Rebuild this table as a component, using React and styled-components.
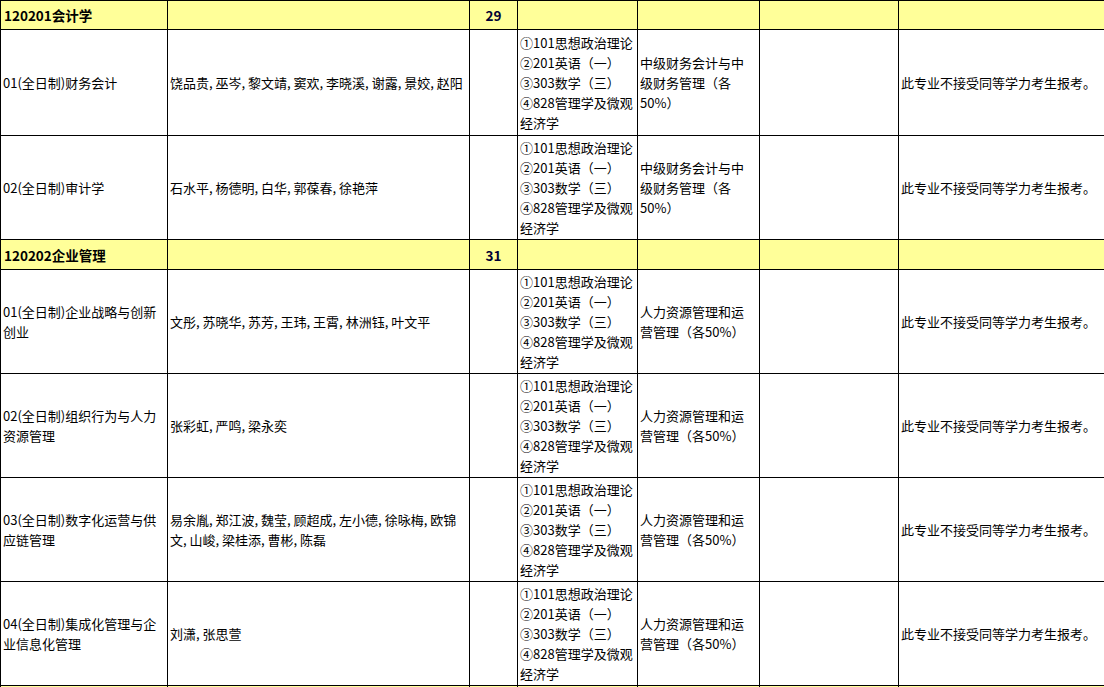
import React from "react";
import styled, { createGlobalStyle } from "styled-components";

const GlobalStyle = createGlobalStyle`
  html, body {
    margin: 0;
    padding: 0;
    background: #ffffff;
    overflow: hidden;
  }
  body {
    font-family: "Noto Sans CJK SC", "Noto Sans", sans-serif;
    font-size: 13px;
    color: #000;
  }
`;

const COLS = [167, 302, 48, 120, 122, 139, 320];

const Sheet = styled.table`
  border-collapse: collapse;
  table-layout: fixed;
  width: ${COLS.reduce((a, b) => a + b, 0)}px;
`;

const Row = styled.tr`
  height: ${props => props.h}px;
  background: ${props => (props.group ? "#ffff99" : "#ffffff")};
`;

const Cell = styled.td`
  border: 1px solid #000;
  padding: 0 ${props => props.pr || 2}px 0 ${props => props.pl || 2}px;
  vertical-align: middle;
  line-height: 20px;
  font-size: ${props => (props.bold ? 13.5 : 13)}px;
  overflow: hidden;
  text-align: ${props => (props.center ? "center" : "left")};
  font-weight: ${props => (props.bold ? 700 : 400)};
  color: ${props => props.tint || "#000"};
`;

const CourseLine = styled.div`
  line-height: 20px;
`;

const COURSES = [
  "①101思想政治理论",
  "②201英语（一）",
  "③303数学（三）",
  "④828管理学及微观经济学",
];

const NOTE = "此专业不接受同等学力考生报考。";

const groups = [
  {
    code: "120201会计学",
    count: "29",
    h: 29,
    rows: [
      {
        name: "01(全日制)财务会计",
        tutors: "饶品贵, 巫岑, 黎文靖, 窦欢, 李晓溪, 谢露, 景姣, 赵阳",
        retest: "中级财务会计与中级财务管理（各50%）",
        h: 106,
      },
      {
        name: "02(全日制)审计学",
        tutors: "石水平, 杨德明, 白华, 郭葆春, 徐艳萍",
        retest: "中级财务会计与中级财务管理（各50%）",
        h: 104,
      },
    ],
  },
  {
    code: "120202企业管理",
    count: "31",
    h: 30,
    rows: [
      {
        name: "01(全日制)企业战略与创新创业",
        tutors: "文彤, 苏晓华, 苏芳, 王玮, 王霄, 林洲钰, 叶文平",
        retest: "人力资源管理和运营管理（各50%）",
        h: 104,
      },
      {
        name: "02(全日制)组织行为与人力资源管理",
        tutors: "张彩虹, 严鸣, 梁永奕",
        retest: "人力资源管理和运营管理（各50%）",
        h: 104,
      },
      {
        name: "03(全日制)数字化运营与供应链管理",
        tutors: "易余胤, 郑江波, 魏莹, 顾超成, 左小德, 徐咏梅, 欧锦文, 山峻, 梁桂添, 曹彬, 陈磊",
        retest: "人力资源管理和运营管理（各50%）",
        h: 104,
      },
      {
        name: "04(全日制)集成化管理与企业信息化管理",
        tutors: "刘潇, 张思萱",
        retest: "人力资源管理和运营管理（各50%）",
        h: 104,
      },
    ],
  },
];

const GroupRow = ({ code, count, h }) => (
  <Row h={h} group>
    <Cell bold pl={3}>{code}</Cell>
    <Cell />
    <Cell bold center tint="#000033">{count}</Cell>
    <Cell />
    <Cell />
    <Cell />
    <Cell />
  </Row>
);

const MajorRow = ({ row }) => (
  <Row h={row.h}>
    <Cell>{row.name}</Cell>
    <Cell>{row.tutors}</Cell>
    <Cell />
    <Cell>
      {COURSES.map(c => (
        <CourseLine key={c}>{c}</CourseLine>
      ))}
    </Cell>
    <Cell pr={8}>{row.retest}</Cell>
    <Cell />
    <Cell>{NOTE}</Cell>
  </Row>
);

export default function App() {
  return (
    <>
      <GlobalStyle />
      <Sheet>
        <colgroup>
          {COLS.map((w, i) => (
            <col key={i} style={{ width: w }} />
          ))}
        </colgroup>
        <tbody>
          {groups.map(g => (
            <React.Fragment key={g.code}>
              <GroupRow code={g.code} count={g.count} h={g.h} />
              {g.rows.map(r => (
                <MajorRow key={r.name} row={r} />
              ))}
            </React.Fragment>
          ))}
          {/* next group starts just below the visible area */}
          <GroupRow code="" count="" h={30} />
        </tbody>
      </Sheet>
    </>
  );
}
